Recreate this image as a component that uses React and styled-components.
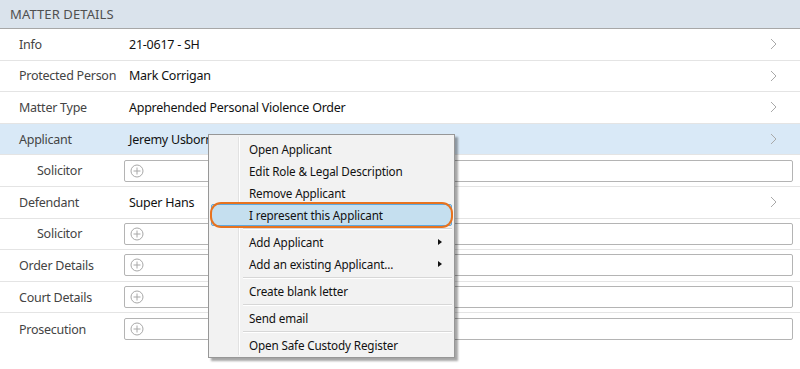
import React from 'react'
import styled, { createGlobalStyle } from 'styled-components'

const Global = createGlobalStyle`
    html, body {
        margin: 0;
        padding: 0;
        background: #ffffff;
    }
    body {
        font-family: "Noto Sans", "Open Sans", sans-serif;
        color: #222;
    }
`

const Page = styled.div`
    position: relative;
    width: 800px;
    height: 369px;
    overflow: hidden;
    background: #ffffff;
`

const Header = styled.div`
    height: 28px;
    display: flex;
    align-items: center;
    padding-left: 10px;
    background-color: #dae3ec;
    border-bottom: 1px solid #a7a7a7;
    font-size: 13px;
    color: #505050;
    letter-spacing: 0.1px;
`

const Row = styled.div`
    display: grid;
    grid-template-columns: 124px 1fr 37px;
    align-items: center;
    height: 31.6px;
    box-sizing: border-box;
    border-bottom: ${({ last }) => (last ? 'none' : '1px solid #e4e4e4')};
    background-color: ${({ selected }) => (selected ? '#d9e9f7' : '#ffffff')};
`

const Label = styled.div`
    padding-left: ${({ sub }) => (sub ? '37px' : '19px')};
    font-size: 12.5px;
    letter-spacing: -0.25px;
    color: #444;
    white-space: nowrap;
`

const Value = styled.div`
    padding-left: 5px;
    font-size: 12.5px;
    letter-spacing: -0.25px;
    color: #111;
    white-space: nowrap;
`

const Chevron = styled.div`
    display: flex;
    align-items: center;
    padding-left: 7px;
`

const InputBox = styled.div`
    grid-column: 2 / 4;
    margin-right: 7px;
    height: 22px;
    box-sizing: border-box;
    border: 1px solid #b4b4b4;
    border-radius: 2px;
    display: flex;
    align-items: center;
    padding-left: 5px;
    background: #ffffff;
`

const Menu = styled.div`
    position: absolute;
    left: 208px;
    top: 134px;
    width: 247px;
    box-sizing: border-box;
    padding: 3px 2px 1px;
    background-color: #f2f2f2;
    border: 1px solid #979797;
    box-shadow: 3px 3px 2px rgba(0, 0, 0, 0.35);
    font-size: 11.7px;
    letter-spacing: -0.15px;
    color: #111;
    &::before {
        content: '';
        position: absolute;
        left: 29px;
        top: 2px;
        bottom: 2px;
        width: 1px;
        background: #e2e2e2;
        box-shadow: 1px 0 0 #ffffff;
    }
`

const Item = styled.div`
    position: relative;
    height: 22px;
    display: flex;
    align-items: center;
    padding-left: 37px;
    box-sizing: border-box;
    border: 1px solid ${({ active }) => (active ? '#5fa8dd' : 'transparent')};
    border-radius: 2px;
    background-color: ${({ active }) => (active ? '#c5dfef' : 'transparent')};
    white-space: nowrap;
`

const Arrow = styled.span`
    position: absolute;
    right: 9px;
    top: 7px;
    width: 0;
    height: 0;
    border-top: 3.5px solid transparent;
    border-bottom: 3.5px solid transparent;
    border-left: 4px solid #111;
`

const Ring = styled.span`
    position: absolute;
    left: -2px;
    right: -2px;
    top: -3px;
    bottom: -3px;
    border: 2px solid #e8731f;
    border-radius: 11px;
    pointer-events: none;
`

const Separator = styled.div`
    height: 5px;
    display: flex;
    align-items: center;
    padding-left: 32px;
    &::after {
        content: '';
        flex: 1;
        height: 1px;
        background: #d7d7d7;
        box-shadow: 0 1px 0 #ffffff;
    }
`

const ChevronIcon = () => (
    <svg width="7" height="12" viewBox="0 0 7 12">
        <polyline points="1,1 6,6 1,11" fill="none" stroke="#a9a9a9" strokeWidth="1" />
    </svg>
)

const PlusIcon = () => (
    <svg width="14" height="14" viewBox="0 0 14 14">
        <circle cx="7" cy="7" r="6" fill="none" stroke="#a8a8a8" strokeWidth="1" />
        <line x1="7" y1="3.5" x2="7" y2="10.5" stroke="#a8a8a8" strokeWidth="1" />
        <line x1="3.5" y1="7" x2="10.5" y2="7" stroke="#a8a8a8" strokeWidth="1" />
    </svg>
)

const rows = [
    { label: 'Info', value: '21-0617 - SH' },
    { label: 'Protected Person', value: 'Mark Corrigan' },
    { label: 'Matter Type', value: 'Apprehended Personal Violence Order' },
    { label: 'Applicant', value: 'Jeremy Usborne', selected: true },
    { label: 'Solicitor', sub: true, input: true },
    { label: 'Defendant', value: 'Super Hans' },
    { label: 'Solicitor', sub: true, input: true },
    { label: 'Order Details', input: true },
    { label: 'Court Details', input: true },
    { label: 'Prosecution', input: true, last: true },
]

const menu = [
    { text: 'Open Applicant' },
    { text: 'Edit Role & Legal Description' },
    { text: 'Remove Applicant' },
    { text: 'I represent this Applicant', active: true },
    { sep: true },
    { text: 'Add Applicant', sub: true },
    { text: 'Add an existing Applicant...', sub: true },
    { sep: true },
    { text: 'Create blank letter' },
    { sep: true },
    { text: 'Send email' },
    { sep: true },
    { text: 'Open Safe Custody Register' },
]

export default function App() {
    return (
        <Page>
            <Global />
            <Header>MATTER DETAILS</Header>
            {rows.map((r, i) => (
                <Row key={i} selected={r.selected} last={r.last}>
                    <Label sub={r.sub}>{r.label}</Label>
                    {r.input ? (
                        <InputBox><PlusIcon /></InputBox>
                    ) : (
                        <>
                            <Value>{r.value}</Value>
                            <Chevron><ChevronIcon /></Chevron>
                        </>
                    )}
                </Row>
            ))}
            <Menu>
                {menu.map((m, i) =>
                    m.sep ? (
                        <Separator key={i} />
                    ) : (
                        <Item key={i} active={m.active}>
                            {m.text}
                            {m.sub && <Arrow />}
                            {m.active && <Ring />}
                        </Item>
                    )
                )}
            </Menu>
        </Page>
    )
}
